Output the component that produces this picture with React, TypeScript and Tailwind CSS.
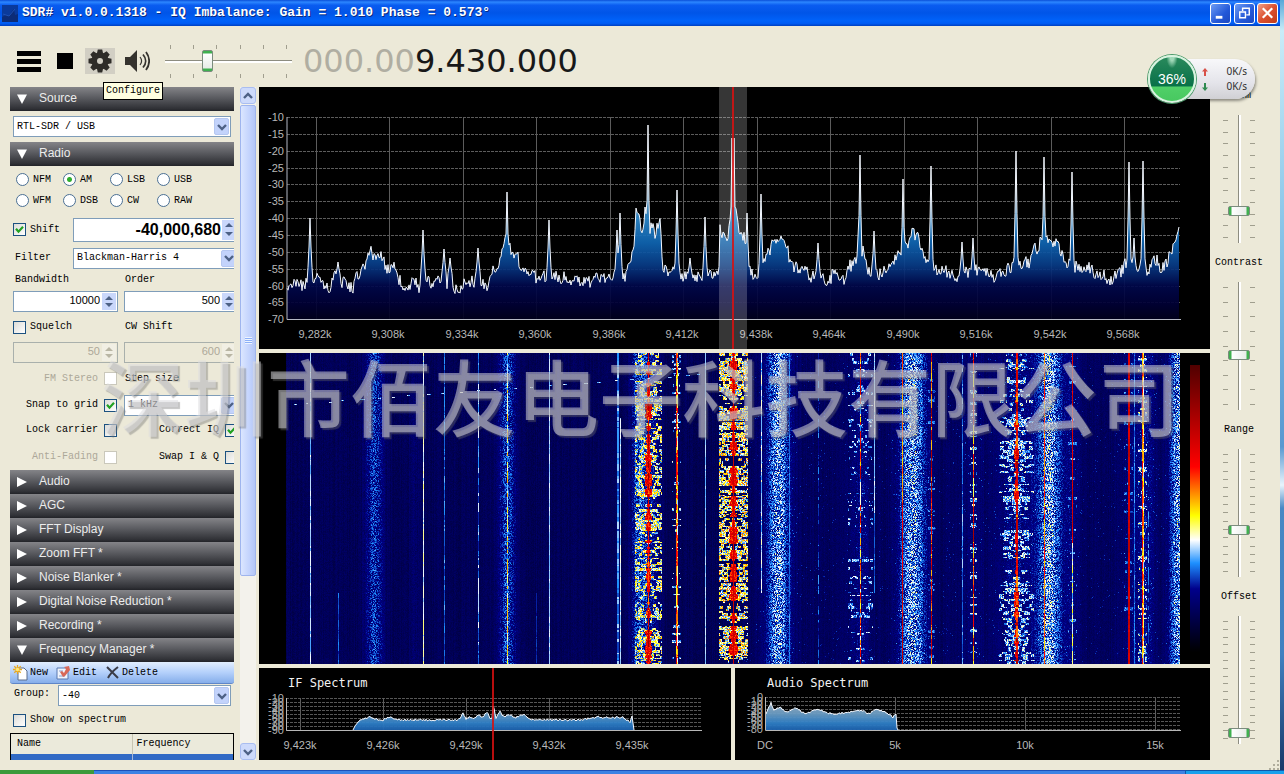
import { useEffect, useRef, type ReactNode } from "react";

/* ---------- helpers ---------- */

function createRandom(seed: number) {
  let s = seed;
  return () => {
    s = (s + 0x6d2b79f5) | 0;
    let t = Math.imul(s ^ (s >>> 15), 1 | s);
    t = (t + Math.imul(t ^ (t >>> 7), 61 | t)) ^ t;
    return ((t ^ (t >>> 14)) >>> 0) / 4294967296;
  };
}

type Point = [number, number];

function interpolate(points: Point[], x: number) {
  for (let i = 1; i < points.length; i++) {
    if (x <= points[i][0]) {
      const [x0, y0] = points[i - 1];
      const [x1, y1] = points[i];
      return y0 + ((y1 - y0) * (x - x0)) / (x1 - x0);
    }
  }
  return points[points.length - 1][1];
}

const toPath = (pts: Point[]) => pts.map(([x, y], i) => `${i ? "L" : "M"}${x} ${y.toFixed(1)}`).join("");

/* ---------- main spectrum ---------- */

const envelope: Point[] = [
  [286, 287], [288, 291], [293, 280], [300, 286], [306, 284], [315, 276], [325, 284], [330, 287], [335, 277], [345, 285], [353, 286],
  [360, 272], [366, 264], [370, 252], [378, 258], [381, 250], [386, 272], [390, 270], [393, 263], [398, 276], [402, 287],
  [415, 283], [421, 288], [430, 281], [440, 281], [460, 290], [466, 279], [480, 284], [487, 285], [492, 272], [500, 262], [504, 245],
  [506, 238], [508, 248], [512, 250], [518, 258], [522, 275], [535, 277], [550, 276], [560, 276], [575, 283],
  [590, 281], [600, 279], [612, 277], [625, 277], [633, 255], [636, 212], [638, 218], [642, 228], [645, 213], [648, 236],
  [652, 225], [655, 238], [660, 212], [662, 260], [664, 268], [668, 272], [675, 270], [685, 277], [695, 277], [705, 272], [715, 277],
  [719, 273], [720, 230], [722, 238], [728, 234], [731, 217], [736, 215], [740, 234], [745, 238], [748, 240], [749, 268],
  [753, 276], [760, 272], [763, 264], [770, 250], [775, 236], [779, 238], [788, 250], [791, 268], [797, 266], [810, 275],
  [818, 278], [828, 281], [835, 272], [843, 280], [850, 266], [856, 263], [858, 250], [864, 252], [868, 270], [880, 274],
  [890, 263], [897, 255], [903, 250], [907, 246], [912, 233], [918, 238], [922, 250], [926, 266], [935, 270], [950, 272],
  [960, 276], [975, 270], [985, 270], [995, 277], [1005, 270], [1015, 264], [1018, 266], [1030, 262], [1035, 250],
  [1040, 242], [1045, 240], [1050, 234], [1056, 245], [1062, 255], [1070, 265], [1085, 267], [1100, 275], [1110, 279],
  [1120, 272], [1125, 265], [1131, 262], [1137, 270], [1142, 264], [1148, 271], [1155, 262], [1163, 268], [1170, 255],
  [1176, 240], [1179, 228],
];

const spikes: Point[] = [
  [310, 218], [338, 262], [423, 230], [444, 249], [450, 258], [478, 248], [507, 192], [549, 220], [617, 230],
  [620, 213], [648, 125], [677, 190], [690, 258], [705, 217], [732, 138], [734, 138], [747, 213], [761, 194], [818, 243],
  [858, 236], [860, 155], [874, 231], [903, 179], [931, 166], [962, 242], [973, 238], [1016, 151], [1044, 157],
  [1072, 172], [1129, 162], [1134, 238], [1143, 161], [1157, 255],
];

function buildTrace(): Point[] {
  const rnd = createRandom(21);
  const out: Point[] = [];
  let drift = 0;
  for (let x = 287; x <= 1179; x++) {
    drift = drift * 0.1 + (rnd() - 0.5) * 14;
    let y = interpolate(envelope, x) + drift;
    for (const [sx, sy] of spikes) {
      const d = Math.abs(x - sx);
      if (d === 0) y = Math.min(y, sy);
      else if (d < 3) y = Math.min(y, sy + (276 - sy) * (d === 1 ? 0.5 : 0.85));
    }
    out.push([x, y]);
  }
  return out;
}

const trace = buildTrace();
const dbLevels = [-10, -15, -20, -25, -30, -35, -40, -45, -50, -55, -60, -65, -70];
const mainFreqs = ["9,282k", "9,308k", "9,334k", "9,360k", "9,386k", "9,412k", "9,438k", "9,464k", "9,490k", "9,516k", "9,542k", "9,568k"];

function SpectrumPanel() {
  return (
    <section className="min-h-0 overflow-hidden bg-black" aria-label="Spectrum">
      <svg viewBox="259 87 951 262" className="block h-full w-full font-['Liberation_Sans',sans-serif] text-[11px]">
        <defs>
          <linearGradient id="spec" gradientUnits="userSpaceOnUse" x1="0" y1="117" x2="0" y2="320">
            <stop offset="0" stopColor="#e8eef4" />
            <stop offset="0.35" stopColor="#7ea8c4" />
            <stop offset="0.5" stopColor="#2f8acc" />
            <stop offset="0.62" stopColor="#0f66b4" />
            <stop offset="0.73" stopColor="#083c88" />
            <stop offset="0.83" stopColor="#00084c" />
            <stop offset="0.92" stopColor="#000036" />
            <stop offset="1" stopColor="#00001c" />
          </linearGradient>
        </defs>
        {dbLevels.map((db, i) => {
          const y = Math.round(117 + i * 16.85);
          return (
            <g key={db}>
              <line x1="287" x2="1180" y1={y + 0.5} y2={y + 0.5} stroke="#5c5c5c" strokeDasharray="3 1" />
              <text x="284" y={y + 4} textAnchor="end" fill="#b8b8b8">{db}</text>
            </g>
          );
        })}
        {mainFreqs.map((f, i) => {
          const x = Math.round(316 + i * 73.45);
          return (
            <g key={f}>
              <line x1={x + 0.5} x2={x + 0.5} y1="117" y2="319" stroke="#5c5c5c" />
              <text x={x - 1} y="338" textAnchor="middle" fill="#b8b8b8">{f}</text>
            </g>
          );
        })}
        <path d={`${toPath(trace)}L1179 319L287 319Z`} fill="url(#spec)" fillOpacity="0.92" />
        <path d={toPath(trace)} fill="none" stroke="#f4f8ff" />
        <path d="M287 117V319.500H1181" fill="none" stroke="#b4b8c4" />
        <rect x="719" y="87" width="28" height="262" fill="#ffffff" fillOpacity="0.21" />
        <rect x="732" y="87" width="2" height="262" fill="#d81010" fillOpacity="0.85" />
      </svg>
    </section>
  );
}

/* ---------- waterfall ---------- */

const palette: [number, number, number, number][] = [
  [0, 0, 0, 0],
  [0.22, 0, 0, 139],
  [0.31, 30, 144, 255],
  [0.39, 255, 255, 255],
  [0.475, 255, 255, 0],
  [0.645, 255, 0, 0],
  [1, 80, 0, 0],
];

function colour(v: number) {
  const c = Math.max(0, Math.min(1, v));
  for (let i = 1; i < palette.length; i++) {
    if (c <= palette[i][0]) {
      const a = palette[i - 1];
      const b = palette[i];
      const t = (c - a[0]) / (b[0] - a[0]);
      return [a[1] + (b[1] - a[1]) * t, a[2] + (b[2] - a[2]) * t, a[3] + (b[3] - a[3]) * t];
    }
  }
  return [80, 0, 0];
}

const W = 894;
const H = 311;

// Noise bands: centre, half width, strength
const hazes = [
  [88, 9, 0.17], [128, 5, 0.04], [221, 9, 0.18], [353, 9, 0.19], [366, 8, 0.1], [492, 12, 0.25], [574, 10, 0.08], [626, 14, 0.26],
  [687, 10, 0.05], [730, 18, 0.09], [763, 13, 0.26], [786, 8, 0.07], [848, 12, 0.06], [861, 9, 0.08], [892, 9, 0.25],
];

// Carriers: x, width, level, jitter, first row, last row
const carriers = [
  [24, 1, 0.36, 0.05, 0, 311], [52, 1, 0.27, 0.05, 240, 311], [137, 1, 0.39, 0.06, 0, 311], [158, 1, 0.29, 0.06, 0, 311],
  [192, 1, 0.31, 0.1, 0, 311], [221, 1, 0.42, 0.16, 0, 311], [250, 1, 0.24, 0.04, 240, 311], [263, 1, 0.36, 0.03, 0, 311],
  [331, 2, 0.31, 0.07, 0, 311], [334, 1, 0.37, 0.04, 65, 311], [362, 1, 0.68, 0.25, 0, 311], [390, 1, 0.62, 0.22, 0, 311],
  [391, 1, 0.5, 0.2, 0, 311], [419, 1, 0.35, 0.03, 0, 311], [475, 1, 0.36, 0.07, 0, 240], [503, 1, 0.29, 0.05, 0, 311],
  [532, 1, 0.24, 0.1, 0, 311], [574, 1, 0.58, 0.35, 0, 311], [588, 1, 0.36, 0.04, 0, 160], [588, 1, 0.28, 0.04, 160, 240],
  [616, 1, 0.55, 0.1, 0, 150], [616, 1, 0.72, 0.12, 150, 311], [645, 1, 0.68, 0.25, 0, 311], [676, 1, 0.3, 0.08, 0, 311],
  [687, 1, 0.66, 0.3, 0, 311], [730, 2, 0.68, 0.22, 0, 311], [758, 1, 0.58, 0.12, 0, 311], [786, 1, 0.72, 0.08, 0, 190],
  [786, 1, 0.4, 0.12, 190, 311], [842, 2, 0.74, 0.06, 0, 311], [848, 1, 0.29, 0.05, 0, 311], [856, 1, 0.6, 0.15, 0, 311],
  [857, 1, 0.46, 0.15, 0, 311], [862, 1, 0.27, 0.1, 120, 290],
];

// Voice signals: centre, half width, density, lowest level, highest level, body width
const voices = [
  [362, 13, 0.56, 0.28, 0.54, 3], [447, 14, 0.72, 0.28, 0.58, 4], [574, 12, 0.14, 0.25, 0.4, 1], [730, 17, 0.46, 0.26, 0.43, 2],
  [687, 3, 0.3, 0.26, 0.42, 1], [390, 4, 0.1, 0.26, 0.42, 1], [645, 3, 0.1, 0.24, 0.34, 1], [786, 4, 0.1, 0.24, 0.36, 1],
  [856, 4, 0.22, 0.25, 0.45, 1], [842, 4, 0.1, 0.24, 0.34, 1],
];

function paintWaterfall(ctx: CanvasRenderingContext2D) {
  const rnd = createRandom(99);
  const v = new Float32Array(W * H);
  const columns = Array.from({ length: W }, () => (rnd() - 0.5) * 0.03);
  for (let y = 0; y < H; y++) {
    for (let x = 0; x < W; x++) {
      let value = 0.12 + columns[x] + rnd() * 0.035 + (x > 450 ? 0.012 : 0);
      if (x > 440 && rnd() < 0.012) value += 0.09;
      for (const [c, w, s] of hazes) {
        const d = (x - c) / w;
        if (Math.abs(d) < 2) value += s * Math.exp(-d * d) * (0.15 + rnd() * 0.95);
      }
      v[y * W + x] = value;
    }
  }
  for (const [c, half, density, lo, hi, body] of voices) {
    let y = 0;
    let energy = 0.6;
    while (y < H) {
      const rows = 1 + Math.floor(rnd() * 3);
      energy = Math.max(0, Math.min(1, energy * 0.75 + 0.13 + (rnd() - 0.5) * 1.1));
      const spread = 0.35 + energy * 0.65;
      let d = 1;
      while (d <= half) {
        const run = 1 + Math.floor(rnd() * 4);
        const on = rnd() < density * (energy > 0.3 ? 1 : 0.35) && (half > 14 ? d < half * spread : true);
        if (on) {
          for (let k = d; k < Math.min(d + run, half + 1); k++) {
            for (let r = 0; r < rows && y + r < H; r++) {
              const row = (y + r) * W;
              if (c + k < W) v[row + c + k] = lo + rnd() * (hi - lo);
              v[row + c - k] = lo + rnd() * (hi - lo);
            }
          }
        }
        d += run;
      }
      if (body > 1) {
        const core = Math.floor(body * energy);
        for (let k = -core; k <= core; k++) {
          for (let r = 0; r < rows && y + r < H; r++) v[(y + r) * W + c + k] = 0.58 + rnd() * 0.2;
        }
      }
      y += rows;
    }
  }
  for (const [x0, w, level, jitter, from, to] of carriers) {
    let value = level;
    for (let y = from; y < to; y++) {
      if (rnd() < 0.3) value = level + (rnd() - 0.5) * jitter * 1.6;
      for (let k = 0; k < w; k++) v[y * W + x0 + k] = value;
    }
  }
  // Centre line of the tuned station
  for (let y = 0; y < H; y++) v[y * W + 447] = 0.75;
  // Sweeping interference pulses
  for (let i = 0; i < 26; i++) {
    const x = 2 + i * 17 + Math.floor(rnd() * 8);
    const y = Math.max(0, Math.round(51 - i * 1.25));
    for (let k = 0; k < 1 + rnd() * 4; k++) v[y * W + x + k] = 0.3 + rnd() * 0.1;
  }
  const image = ctx.createImageData(W, H);
  for (let i = 0; i < v.length; i++) {
    const [r, g, b] = colour(v[i]);
    image.data[i * 4] = r;
    image.data[i * 4 + 1] = g;
    image.data[i * 4 + 2] = b;
    image.data[i * 4 + 3] = 255;
  }
  ctx.putImageData(image, 0, 0);
}

function WaterfallPanel() {
  const ref = useRef<HTMLCanvasElement>(null);
  useEffect(() => {
    const ctx = ref.current?.getContext("2d");
    if (ctx) paintWaterfall(ctx);
  }, []);
  return (
    <section className="flex min-h-0 bg-black pl-[27px]" aria-label="Waterfall">
      <canvas ref={ref} width={W} height={H} className="h-full min-w-0 flex-1" />
      <div className="w-[30px] px-[10px] py-3">
        <div className="h-full bg-[linear-gradient(to_top,#000000_0%,#00008b_22%,#1e90ff_31%,#ffffff_39%,#ffff00_47.5%,#ff0000_64.5%,#500000_100%)]" />
      </div>
    </section>
  );
}

/* ---------- small spectra ---------- */

const ifShape: Point[] = [
  [353, 730], [356, 724], [362, 719], [370, 717], [381, 721], [389, 717], [400, 720], [455, 720], [460, 719], [463, 713], [466, 719],
  [470, 717], [474, 719], [478, 715], [483, 717], [487, 712], [490, 719], [492, 718], [493, 705], [494, 708], [496, 718], [500, 712], [504, 717],
  [509, 714], [515, 718], [524, 714], [530, 720], [580, 720], [598, 717], [610, 718], [622, 717], [630, 722], [632, 716], [634, 730],
];
const audioShape: Point[] = [
  [766, 714], [768, 709], [771, 703], [774, 710], [780, 707], [786, 712], [796, 708], [805, 714], [817, 709], [832, 714],
  [850, 712], [862, 710], [868, 714], [876, 710], [884, 711], [889, 714], [893, 717], [896, 714], [897, 728], [898, 730],
];

function roughen(shape: Point[], seed: number): Point[] {
  const rnd = createRandom(seed);
  const first = shape[0][0];
  const last = shape[shape.length - 1][0];
  const out: Point[] = [];
  for (let x = first; x <= last; x++) {
    const edge = x - first < 3 || last - x < 4;
    out.push([x, interpolate(shape, x) + (edge ? 0 : (rnd() - 0.5) * 2)]);
  }
  return out;
}

const ifTrace = roughen(ifShape, 5);
const audioTrace = roughen(audioShape, 9);

type SmallProps = {
  title: string;
  box: string;
  left: number;
  right: number;
  titleX: number;
  levels: string[];
  ticks: [string, number][];
  data: Point[];
  gridFrom: number;
  children?: ReactNode;
};

function SmallSpectrum({ title, box, left, right, titleX, levels, ticks, data, gridFrom, children }: SmallProps) {
  const id = title.replace(" ", "");
  return (
    <section className="min-h-0 min-w-0 overflow-hidden bg-black" aria-label={title}>
      <svg viewBox={box} preserveAspectRatio="xMinYMin" className="block h-full w-full font-['Liberation_Sans',sans-serif] text-[11px]">
        <defs>
          <linearGradient id={id} gradientUnits="userSpaceOnUse" x1="0" y1="700" x2="0" y2="731">
            <stop offset="0" stopColor="#a8b8c8" />
            <stop offset="0.45" stopColor="#6a9cc4" />
            <stop offset="0.75" stopColor="#2f80c8" />
            <stop offset="1" stopColor="#1a5eac" />
          </linearGradient>
        </defs>
        <text x={titleX} y="687" fill="#f2f2f2" className="font-['DejaVu_Sans_Mono',monospace] text-[12px]">{title}</text>
        {levels.map((l, i) => (
          <g key={l}>
            <line x1={left} x2={right} y1={gridFrom + i * 4 + 0.5} y2={gridFrom + i * 4 + 0.5} stroke="#565656" strokeDasharray="3 1" />
            <text x={left - 2} y={gridFrom + i * 4 + 4} textAnchor="end" fill="#b0b0b0">{l}</text>
          </g>
        ))}
        {ticks.map(([label, x]) => (
          <g key={label}>
            <line x1={x + 0.5} x2={x + 0.5} y1={gridFrom} y2="730" stroke="#5c5c5c" />
            <text x={x} y="749" textAnchor="middle" fill="#b8b8b8">{label}</text>
          </g>
        ))}
        <path d={`${toPath(data)}V730H${data[0][0]}Z`} fill={`url(#${id})`} fillOpacity="0.95" />
        <path d={toPath(data)} fill="none" stroke="#f4f8ff" />
        <path d={`M${left + 0.5} ${gridFrom}V730.500H${right}`} fill="none" stroke="#b8b8b8" />
        {children}
      </svg>
    </section>
  );
}

/* ---------- form parts ---------- */

const Chevron = ({ up = false }: { up?: boolean }) => (
  <svg viewBox="0 0 10 8" className="h-2 w-[10px]" fill="none" stroke="#4d6185" strokeWidth="2.4">
    <path d={up ? "M1 6l4-4 4 4" : "M1 2l4 4 4-4"} />
  </svg>
);

function Combo({ label, value, className }: { label: string; value: string; className: string }) {
  return (
    <div className={`relative h-[21px] border border-[#7f9db9] bg-white ${className}`}>
      <select aria-label={label} className="h-full w-full appearance-none bg-transparent pl-[3px] outline-none">
        <option>{value}</option>
      </select>
      <span className="pointer-events-none absolute inset-y-px right-px flex w-[15px] items-center justify-center rounded-[2px] border border-[#b5c7f0] bg-[#c3d3fb]">
        <Chevron />
      </span>
    </div>
  );
}

function Spinner({ label, value, className, disabled = false, large = false }: { label: string; value: string; className: string; disabled?: boolean; large?: boolean }) {
  const arrows = disabled ? "#b9b6a4" : "#4d6185";
  return (
    <div className={`flex border ${disabled ? "border-[#a9b0ac] bg-[#ece9d8] text-[#aca899]" : "border-[#7f9db9] bg-white text-black"} ${className}`}>
      <input
        aria-label={label}
        defaultValue={value}
        disabled={disabled}
        className={`min-w-0 flex-1 bg-transparent text-right font-['Liberation_Sans',sans-serif] outline-none ${large ? "text-[16px] font-bold" : "pb-1 pr-px text-[11px]"}`}
      />
      <span className={`m-px flex w-[14px] flex-col ${disabled ? "bg-[#f1efe4]" : "bg-[#c9d7fb]"}`}>
        {["M0 5l4-4 4 4z", "M0 0l4 4 4-4z"].map((d, i) => (
          <button key={d} disabled={disabled} aria-label={`${label} ${i ? "down" : "up"}`} className="flex flex-1 items-center justify-center">
            <svg viewBox="0 0 8 5" className="h-[5px] w-2" fill={arrows}><path d={d} /></svg>
          </button>
        ))}
      </span>
    </div>
  );
}

function Check({ label, checked = false, disabled = false, before = false, className = "" }: { label: string; checked?: boolean; disabled?: boolean; before?: boolean; className?: string }) {
  return (
    <label className={`flex items-center whitespace-nowrap ${before ? "flex-row-reverse gap-[6px]" : "gap-1"} ${disabled ? "text-[#aca899]" : ""} ${className}`}>
      <span className="relative h-[13px] w-[13px] shrink-0">
        <input
          type="checkbox"
          defaultChecked={checked}
          disabled={disabled}
          className="peer block h-[13px] w-[13px] appearance-none border border-[#1c5180] bg-[linear-gradient(135deg,#dcdcd7,#ffffff)] disabled:border-[#cac8bb] disabled:bg-none disabled:bg-white"
        />
        <svg viewBox="0 0 13 13" className="pointer-events-none absolute inset-0 hidden h-[13px] w-[13px] peer-checked:block" fill="none" stroke="#21a121" strokeWidth="2.2">
          <path d="M3 5.800l2.500 2.900L10 3.800" />
        </svg>
      </span>
      {label}
    </label>
  );
}

function Header({ label, open = false }: { label: string; open?: boolean }) {
  return (
    <button className="flex h-6 w-full shrink-0 items-center bg-[linear-gradient(to_bottom,#848488_0%,#5a5b60_45%,#303136_90%,#222328_100%)] pb-[3px] pl-[6px] text-left font-['Liberation_Sans',sans-serif] text-[12px] text-[#ececec]">
      <svg viewBox="0 0 12 12" className="mr-[11px] mt-[3px] h-3 w-3" fill="#fff">
        <path d={open ? "M1 1.500h10L6 11z" : "M1 1l10 5-10 5z"} />
      </svg>
      {label}
    </button>
  );
}

const modes = ["NFM", "AM", "LSB", "USB", "WFM", "DSB", "CW", "RAW"];

function RadioSection() {
  return (
    <div className="shrink-0">
      <fieldset className="grid grid-cols-[repeat(4,47px)] pl-[6px] pt-[3px]">
        {modes.map((m) => (
          <label key={m} className="flex h-[21px] items-center gap-1">
            <input
              type="radio"
              name="mode"
              defaultChecked={m === "AM"}
              className="h-[13px] w-[13px] appearance-none rounded-full border border-[#4a6f94] bg-white checked:bg-[radial-gradient(circle,#2fae2f_0_2px,#ffffff_3px)]"
            />
            {m}
          </label>
        ))}
      </fieldset>
      <div className="flex h-[37px] items-center pl-[3px]">
        <Check label="Shift" checked className="w-[60px]" />
        <Spinner label="Shift frequency" value="-40,000,680" large className="-mr-1 h-6 min-w-0 flex-1" />
      </div>
      <div className="flex h-5 items-center pl-[5px]">
        <span className="w-[58px]">Filter</span>
        <Combo label="Filter" value="Blackman-Harris 4" className="-mr-1 min-w-0 flex-1" />
      </div>
      <div className="flex h-[23px] items-center pl-[5px]">
        <span className="w-[110px]">Bandwidth</span>
        <span>Order</span>
      </div>
      <div className="-mr-1 flex gap-[6px] pl-[3px]">
        <Spinner label="Bandwidth" value="10000" className="h-[21px] w-[105px]" />
        <Spinner label="Order" value="500" className="h-[21px] min-w-0 flex-1" />
      </div>
      <div className="flex h-[30px] items-center pl-[3px]">
        <Check label="Squelch" className="w-[112px]" />
        <span>CW Shift</span>
      </div>
      <div className="-mr-1 flex gap-[6px] pl-[3px]">
        <Spinner label="Squelch" value="50" disabled className="h-[21px] w-[105px]" />
        <Spinner label="CW Shift" value="600" disabled className="h-[21px] min-w-0 flex-1" />
      </div>
      <div className="flex h-[31px] items-center">
        <Check label="FM Stereo" disabled before className="mr-2 w-[107px]" />
        <span>Step size</span>
      </div>
      <div className="flex h-[22px] items-center">
        <Check label="Snap to grid" checked before className="mr-[7px] w-[107px]" />
        <Combo label="Step size" value="1 kHz" className="-mr-1 min-w-0 flex-1" />
      </div>
      <div className="flex h-7 items-center">
        <Check label="Lock carrier" before className="mr-7 w-[107px]" />
        <Check label="Correct IQ" checked before className="-mr-1 w-[93px]" />
      </div>
      <div className="flex h-[26px] items-center">
        <Check label="Anti-Fading" disabled before className="mr-7 w-[107px]" />
        <Check label="Swap I & Q" before className="-mr-1 w-[93px]" />
      </div>
    </div>
  );
}

const collapsed = ["Audio", "AGC", "FFT Display", "Zoom FFT *", "Noise Blanker *", "Digital Noise Reduction *", "Recording *"];

function Sidebar() {
  return (
    <aside className="flex w-[224px] shrink-0 flex-col overflow-hidden">
      <Header label="Source" open />
      <div className="flex h-[31px] shrink-0 items-center pl-[3px] pr-[3px]">
        <Combo label="Source" value="RTL-SDR / USB" className="w-full" />
      </div>
      <Header label="Radio" open />
      <RadioSection />
      {collapsed.map((c) => (
        <Header key={c} label={c} />
      ))}
      <Header label="Frequency Manager *" open />
      <div className="flex h-[22px] shrink-0 items-center rounded-b-[3px] border-b border-[#5f86c8] bg-[linear-gradient(to_bottom,#e2eefe,#b4d0fb_50%,#86aeea)] pl-[3px]">
        <button className="flex items-center gap-px">
          <svg viewBox="0 0 16 16" className="h-4 w-4">
            <path d="M5 3h6l3 3v9H5z" fill="#fff" stroke="#5a6c8c" />
            <path d="M4.500 0v9M0 4.500h9M1.300 1.300l6.400 6.400M7.700 1.300L1.300 7.700" stroke="#e8a820" strokeWidth="1.300" />
            <circle cx="4.500" cy="4.500" r="1.800" fill="#ffe878" />
          </svg>
          New
        </button>
        <button className="ml-2 flex items-center gap-px">
          <svg viewBox="0 0 16 16" className="h-4 w-4">
            <path d="M1 3h11v11H1z" fill="#f0f4fc" stroke="#5878b0" />
            <path d="M3 6h4M3 11h6" stroke="#88a0d0" />
            <path d="M4 7l3 5 2-1 5-6-1-4-5 1 2 2-2 4-2-2z" fill="#d86858" />
          </svg>
          Edit
        </button>
        <button className="ml-2 flex items-center gap-px">
          <svg viewBox="0 0 16 16" className="h-4 w-4" fill="none" stroke="#3a3c48" strokeWidth="2">
            <path d="M2 2l11 11M13 2C9 5 5 9 3 13" />
          </svg>
          Delete
        </button>
      </div>
      <div className="flex h-[23px] shrink-0 items-center pl-1 pr-[3px]">
        <span className="w-11 pb-1">Group:</span>
        <Combo label="Group" value="-40" className="min-w-0 flex-1" />
      </div>
      <div className="flex h-[26px] shrink-0 items-center pl-[3px]">
        <Check label="Show on spectrum" />
      </div>
      <div className="shrink-0 border border-black bg-[#ece9d8]">
        <table className="w-full table-fixed border-collapse text-left">
          <thead>
            <tr className="h-[20px] bg-[#ebeadb]">
              <th className="w-[121px] border-r border-[#c7c5b2] pl-[6px] font-normal">Name</th>
              <th className="pl-1 font-normal">Frequency</th>
            </tr>
          </thead>
          <tbody>
            <tr className="h-5 bg-[#316ac5]">
              <td className="border-r border-[#a8b8d8]" />
              <td />
            </tr>
          </tbody>
        </table>
      </div>
    </aside>
  );
}

function ScrollBar() {
  return (
    <div className="mx-[6px] mr-[3px] flex w-4 shrink-0 flex-col bg-[#f3f2ec]">
      <button aria-label="Scroll up" className="flex h-[17px] items-center justify-center rounded-[3px] border border-[#a9bdf0] bg-[#cddafb]">
        <Chevron up />
      </button>
      <div className="mt-px flex flex-[470] items-center justify-center rounded-[2px] border border-[#9fb5ee] bg-[linear-gradient(to_right,#dbe6ff,#c3d3fd_60%,#b3c6f6)]">
        <span className="h-[7px] w-[7px] bg-[repeating-linear-gradient(to_bottom,#eef4fe_0_1px,#8cb0f8_1px_2px)]" />
      </div>
      <div className="flex-[168]" />
      <button aria-label="Scroll down" className="flex h-[17px] items-center justify-center rounded-[3px] border border-[#a9bdf0] bg-[#cddafb]">
        <Chevron />
      </button>
    </div>
  );
}

/* ---------- sliders ---------- */

function Ticks({ count, vertical = false }: { count: number; vertical?: boolean }) {
  return (
    <div className={`flex justify-between ${vertical ? "w-[5px] flex-col py-[5px]" : "h-1 px-[5px]"}`}>
      {Array.from({ length: count }, (_, i) => (
        <i key={i} className={vertical ? "h-px w-full bg-[#a09e8e]" : "h-full w-px bg-[#a09e8e]"} />
      ))}
    </div>
  );
}

function VerticalSlider({ label, value, ticks }: { label: string; value: number; ticks: number }) {
  return (
    <label className="flex h-[167px] shrink-0 flex-col items-center">
      <span className="flex h-[18px] items-center">{label}</span>
      <span className="mt-[10px] flex h-32">
        <Ticks count={ticks} vertical />
        <input
          type="range"
          defaultValue={value}
          className="h-32 w-[22px] appearance-none bg-[linear-gradient(to_right,#8d8c80_0_1px,#ffffff_1px_3px)] bg-[length:3px_100%] bg-center bg-no-repeat [direction:rtl] [writing-mode:vertical-lr] [&::-webkit-slider-thumb]:h-[10px] [&::-webkit-slider-thumb]:w-[22px] [&::-webkit-slider-thumb]:appearance-none [&::-webkit-slider-thumb]:rounded-[2px] [&::-webkit-slider-thumb]:border [&::-webkit-slider-thumb]:border-[#7b8c7e] [&::-webkit-slider-thumb]:bg-[linear-gradient(to_right,#3fb04f_0_2px,#ffffff_3px,#e8ece8_17px,#3fb04f_18px)]"
        />
        <Ticks count={ticks} vertical />
      </span>
    </label>
  );
}

function Toolbar() {
  return (
    <div className="flex h-[61px] shrink-0 items-center pl-[17px] pt-[9px]">
      <button aria-label="Menu" className="flex w-6 flex-col gap-[3px]">
        <i className="h-[5px] bg-black" />
        <i className="h-[5px] bg-black" />
        <i className="h-[5px] bg-black" />
      </button>
      <button aria-label="Stop" className="ml-4 h-4 w-4 bg-black" />
      <div className="relative ml-3">
        <button aria-label="Configure" className="flex h-[26px] w-[30px] items-center justify-center bg-[#d2cfc4]">
          <svg viewBox="-12 -12 24 24" className="h-6 w-6" fill="#2e2c28">
            {[0, 45, 90, 135].map((a) => (
              <path key={a} d="M-2.200 -11.500h4.400l1 4.500v14l-1 4.500h-4.400l-1-4.500v-14z" transform={`rotate(${a})`} />
            ))}
            <circle r="8.500" />
            <circle r="3" fill="#d2cfc4" />
          </svg>
        </button>
        <div role="tooltip" className="absolute left-[18px] top-[34px] z-10 flex h-[18px] w-[60px] items-center justify-center border border-black bg-[#ffffe1]">
          Configure
        </div>
      </div>
      <button aria-label="Audio" className="ml-[10px]">
        <svg viewBox="0 0 25 24" className="h-6 w-[25px]" fill="none" stroke="#35332e" strokeWidth="1.800">
          <path d="M0 8h5l7-7v22l-7-7H0z" fill="#35332e" stroke="none" />
          <path d="M15 8c2 2.500 2 5.500 0 8" strokeWidth="1.200" />
          <path d="M18 5.500c3.500 4 3.500 9 0 13M21 3c4.200 5.500 4.200 12.500 0 18" />
        </svg>
      </button>
      <div className="ml-[15px] w-[127px]">
        <Ticks count={6} />
        <input
          type="range"
          aria-label="Volume"
          defaultValue={32}
          className="my-px block h-[23px] w-full appearance-none bg-[linear-gradient(to_bottom,#8d8c80_0_1px,#ffffff_1px_3px)] bg-[length:100%_3px] bg-center bg-no-repeat [&::-webkit-slider-thumb]:h-[22px] [&::-webkit-slider-thumb]:w-[11px] [&::-webkit-slider-thumb]:appearance-none [&::-webkit-slider-thumb]:rounded-[2px] [&::-webkit-slider-thumb]:border [&::-webkit-slider-thumb]:border-[#7b8c7e] [&::-webkit-slider-thumb]:bg-[linear-gradient(to_bottom,#3fb04f_0_2px,#ffffff_3px,#e8ece8_17px,#3fb04f_18px)]"
        />
        <Ticks count={6} />
      </div>
      <output className="ml-[11px] font-['DejaVu_Sans',sans-serif] text-[32px] font-normal leading-8 text-[#181818]">
        <span className="text-[#b0aea2]">000.00</span>9.430.000
      </output>
    </div>
  );
}

function TitleBar() {
  const button = "flex h-[21px] w-[21px] items-center justify-center rounded-[3px] border border-white";
  return (
    <header className="flex h-[26px] shrink-0 items-center gap-[2px] bg-[linear-gradient(to_bottom,#0a4fd8_0%,#2c86ff_8%,#0a5cf0_20%,#0055e8_50%,#0062fa_80%,#005cf4_90%,#0040c0_100%)] pl-[2px] pr-[2px]">
      <svg viewBox="0 0 16 17" className="mr-[2px] h-[17px] w-4">
        <path d="M0 0h16v17H0z" fill="#0a3a9c" />
        <path d="M0 12l4-2 3 1 3-5 2-2 1 6 3-1v8H0z" fill="#0c2c78" />
        <path d="M1 9l6 2 6-7" fill="none" stroke="#1c50b4" />
      </svg>
      <h1 className="min-w-0 flex-1 truncate whitespace-pre font-['Liberation_Mono',monospace] text-[13px] font-bold text-white [text-shadow:1px_1px_#0a2a80]">
        SDR# v1.0.0.1318 - IQ Imbalance: Gain = 1.010 Phase = 0.573°
      </h1>
      <button aria-label="Minimize" className={`${button} bg-[linear-gradient(135deg,#6d9cf4,#2358d8_60%,#1c48c0)]`}>
        <svg viewBox="0 0 20 20" className="h-5 w-5"><path d="M5 13h7v3H5z" fill="#fff" /></svg>
      </button>
      <button aria-label="Restore" className={`${button} ml-px bg-[linear-gradient(135deg,#6d9cf4,#2358d8_60%,#1c48c0)]`}>
        <svg viewBox="0 0 20 20" className="h-5 w-5" fill="none" stroke="#fff" strokeWidth="1.500">
          <path d="M5 9h6v6H5zM8 8V5h7v7h-3" />
        </svg>
      </button>
      <button aria-label="Close" className={`${button} bg-[linear-gradient(135deg,#f0a088,#dc5030_50%,#c03c18)]`}>
        <svg viewBox="0 0 20 20" className="h-5 w-5" stroke="#fff" strokeWidth="2.300"><path d="M5 5l10 10M15 5L5 15" /></svg>
      </button>
    </header>
  );
}

function NetMeter() {
  return (
    <div className="absolute right-[25px] top-[55px] z-20 flex items-center font-['Noto_Sans',sans-serif]">
      <div className="z-10 flex h-12 w-12 items-center justify-center rounded-full border-2 border-[#d8f4e0] bg-[radial-gradient(ellipse_at_50%_0%,#a0d8b8_0_6%,transparent_18%),linear-gradient(to_bottom,#2a8a5c_0%,#087048_66%,#50d068_68%,#48c860_100%)] font-['Liberation_Sans',sans-serif] text-[14px] text-white shadow-[0_0_0_1px_#4a9a6a]">
        36%
      </div>
      <div className="-ml-6 flex h-10 w-[83px] flex-col justify-center rounded-r-[20px] bg-[linear-gradient(to_bottom,#f8f8fa,#e4e4ea_60%,#d0d0d4)] pl-[30px] pr-2 text-[10px] leading-[15px] text-[#303030] shadow-[1px_2px_3px_rgba(0,0,0,0.4)]">
        {["#d85048", "#2e8a50"].map((c, i) => (
          <div key={c} className="flex items-center justify-between">
            <svg viewBox="0 0 6 8" className="h-2 w-[6px]" fill={c}>
              <path d={i ? "M3 8L0 4.500h2V0h2v4.500h2z" : "M3 0L0 3.500h2V8h2V3.500h2z"} />
            </svg>
            0K/s
          </div>
        ))}
      </div>
    </div>
  );
}

export default function App() {
  return (
    <div className="relative flex h-screen min-h-[600px] w-full flex-col overflow-hidden bg-[#ece9d8] font-['Liberation_Mono',monospace] text-[10px] leading-3 text-black">
      <div className="flex min-h-0 flex-1">
        <div className="relative flex min-w-0 flex-1 flex-col">
          <TitleBar />
          <Toolbar />
          <main className="flex min-h-0 flex-1 pb-[10px] pl-[10px]">
            <Sidebar />
            <ScrollBar />
            <div className="grid min-w-0 flex-1 grid-rows-[262fr_311fr_92fr] gap-1">
              <SpectrumPanel />
              <WaterfallPanel />
              <div className="grid min-h-0 grid-cols-[472fr_475fr] gap-1">
                <SmallSpectrum
                  title="IF Spectrum"
                  box="259 668 472 92"
                  left={286}
                  right={702}
                  titleX={288}
                  gridFrom={698}
                  levels={["-10", "-20", "-30", "-40", "-50", "-60", "-70", "-80", "-90"]}
                  ticks={[["9,423k", 300], ["9,426k", 383], ["9,429k", 466], ["9,432k", 549], ["9,435k", 632]]}
                  data={ifTrace}
                >
                  <rect x="492" y="668" width="2" height="92" fill="#d81010" fillOpacity="0.85" />
                </SmallSpectrum>
                <SmallSpectrum
                  title="Audio Spectrum"
                  box="735 668 475 92"
                  left={765}
                  right={1181}
                  titleX={767}
                  gridFrom={697}
                  levels={["0", "-10", "-20", "-30", "-40", "-50", "-60", "-70", "-80"]}
                  ticks={[["DC", 765], ["5k", 895], ["10k", 1025], ["15k", 1155]]}
                  data={audioTrace}
                />
              </div>
            </div>
            <div className="w-[70px] shrink-0 overflow-hidden pr-3">
              <VerticalSlider label="Zoom" value={23} ticks={11} />
              <VerticalSlider label="Contrast" value={42} ticks={9} />
              <VerticalSlider label="Range" value={36} ticks={15} />
              <VerticalSlider label="Offset" value={5} ticks={16} />
            </div>
          </main>
          <NetMeter />
          <svg viewBox="0 0 10 10" className="absolute bottom-0 right-px h-[10px] w-[10px]" fill="#b0ad9c">
            <path d="M8 0h2v2H8zM4 4h2v2H4zM8 4h2v2H8zM0 8h2v2H0zM4 8h2v2H4zM8 8h2v2H8z" />
          </svg>
        </div>
        <div className="w-1 bg-[linear-gradient(to_bottom,#58a8d8_0%,#c8ecf8_4%,#88c4e8_30%,#5898d0_58%,#e8f4fc_63%,#4888c4_66%,#4080c0_85%,#183868_100%)]" />
      </div>
      <footer className="flex h-1 shrink-0">
        <div className="w-[94px] bg-[#3c9a3c]" />
        <div className="flex-1 border-t border-[#1c50b8] bg-[#3c82e4]" />
        <div className="w-[99px] border-t border-l border-[#1058a8] bg-[#18a0ec]" />
      </footer>
      <div aria-hidden="true" className="pointer-events-none absolute left-[101px] top-[348px] z-10 whitespace-nowrap font-['Noto_Sans_CJK_SC',sans-serif] text-[83px] font-medium leading-[92px] text-[rgba(220,220,225,0.52)] [text-shadow:2px_2px_1px_rgba(110,110,110,0.4)]">
        深圳市佰友电子科技有限公司
      </div>
    </div>
  );
}
